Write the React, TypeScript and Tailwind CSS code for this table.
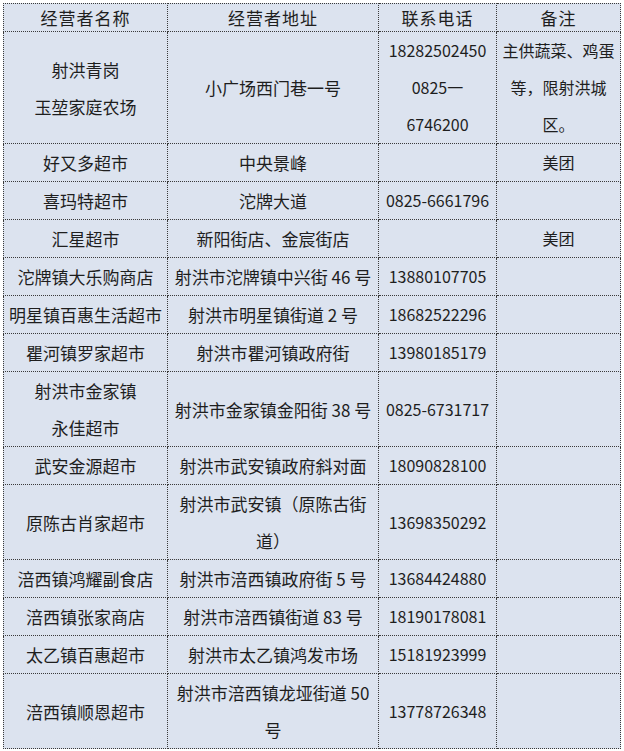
type Row = {
  name: string[];
  addr: string[];
  phone: string[];
  note: string[];
};

const ROWS: Row[] = [
  {
    name: ["射洪青岗", "玉堃家庭农场"],
    addr: ["小广场西门巷一号"],
    phone: ["18282502450", "0825一", "6746200"],
    note: ["主供蔬菜、鸡蛋", "等，限射洪城", "区。"],
  },
  { name: ["好又多超市"], addr: ["中央景峰"], phone: [], note: ["美团"] },
  { name: ["喜玛特超市"], addr: ["沱牌大道"], phone: ["0825-6661796"], note: [] },
  { name: ["汇星超市"], addr: ["新阳街店、金宸街店"], phone: [], note: ["美团"] },
  { name: ["沱牌镇大乐购商店"], addr: ["射洪市沱牌镇中兴街 46 号"], phone: ["13880107705"], note: [] },
  { name: ["明星镇百惠生活超市"], addr: ["射洪市明星镇街道 2 号"], phone: ["18682522296"], note: [] },
  { name: ["瞿河镇罗家超市"], addr: ["射洪市瞿河镇政府街"], phone: ["13980185179"], note: [] },
  {
    name: ["射洪市金家镇", "永佳超市"],
    addr: ["射洪市金家镇金阳街 38 号"],
    phone: ["0825-6731717"],
    note: [],
  },
  { name: ["武安金源超市"], addr: ["射洪市武安镇政府斜对面"], phone: ["18090828100"], note: [] },
  {
    name: ["原陈古肖家超市"],
    addr: ["射洪市武安镇（原陈古街", "道）"],
    phone: ["13698350292"],
    note: [],
  },
  { name: ["涪西镇鸿耀副食店"], addr: ["射洪市涪西镇政府街 5 号"], phone: ["13684424880"], note: [] },
  { name: ["涪西镇张家商店"], addr: ["射洪市涪西镇街道 83 号"], phone: ["18190178081"], note: [] },
  { name: ["太乙镇百惠超市"], addr: ["射洪市太乙镇鸿发市场"], phone: ["15181923999"], note: [] },
  {
    name: ["涪西镇顺恩超市"],
    addr: ["射洪市涪西镇龙垭街道 50", "号"],
    phone: ["13778726348"],
    note: [],
  },
];

const cell =
  "border border-dotted border-[#3a3a3a] p-0 text-center align-middle whitespace-nowrap";
const head = `${cell} h-[28px] font-normal leading-[27px] tracking-[1px]`;
const body = `${cell} leading-[37px]`;

const Lines = ({ lines }: { lines: string[] }) => (
  <>
    {lines.map((l, i) => (
      <div key={i}>{l}</div>
    ))}
  </>
);

export default function App() {
  return (
    <div
      className="min-h-[751px] w-[624px] bg-white pl-[3px] pt-[3px] text-[#1e1e1e]"
      style={{ fontFamily: '"Noto Sans CJK SC", "Noto Sans", sans-serif' }}
    >
      <table className="table-fixed border-collapse bg-[#dce3ef] text-[17px]">
        <colgroup>
          <col className="w-[164px]" />
          <col className="w-[211px]" />
          <col className="w-[118px]" />
          <col className="w-[124px]" />
        </colgroup>
        <thead>
          <tr>
            <th className={head}>经营者名称</th>
            <th className={head}>经营者地址</th>
            <th className={head}>联系电话</th>
            <th className={head}>备注</th>
          </tr>
        </thead>
        <tbody>
          {ROWS.map((r, i) => (
            <tr key={i}>
              <td className={body}>
                <Lines lines={r.name} />
              </td>
              <td className={body}>
                <Lines lines={r.addr} />
              </td>
              <td className={`${body} text-[16px]`}>
                <Lines lines={r.phone} />
              </td>
              <td className={`${body} text-[16px]`}>
                <Lines lines={r.note} />
              </td>
            </tr>
          ))}
        </tbody>
      </table>
    </div>
  );
}
